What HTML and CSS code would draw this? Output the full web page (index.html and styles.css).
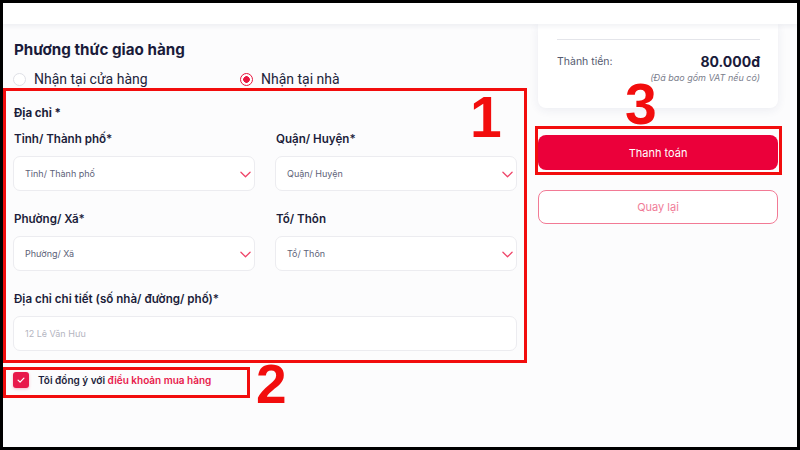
FILE: index.html
```html
<!DOCTYPE html>
<html lang="vi">
<head>
<meta charset="utf-8">
<title>Thanh toán</title>
<link rel="stylesheet" href="styles.css">
</head>
<body>
<div class="frame">
  <header class="topbar"></header>
  <main class="main">
    <section class="left">
      <h2 class="heading">Phương thức giao hàng</h2>
      <div class="radios">
        <label class="radio"><span class="dot"></span>Nhận tại cửa hàng</label>
        <label class="radio checked"><span class="dot"></span>Nhận tại nhà</label>
      </div>
      <div class="section-title">Địa chỉ *</div>
      <div class="grid">
        <div class="field">
          <div class="label">Tỉnh/ Thành phố*</div>
          <div class="select"><span>Tỉnh/ Thành phố</span><svg class="chev" viewBox="0 0 12 7" width="11" height="7"><path d="M1 1l5 5 5-5" fill="none" stroke="#ef4468" stroke-width="1.4" stroke-linecap="round" stroke-linejoin="round"/></svg></div>
        </div>
        <div class="field">
          <div class="label">Quận/ Huyện*</div>
          <div class="select"><span>Quận/ Huyện</span><svg class="chev" viewBox="0 0 12 7" width="11" height="7"><path d="M1 1l5 5 5-5" fill="none" stroke="#ef4468" stroke-width="1.4" stroke-linecap="round" stroke-linejoin="round"/></svg></div>
        </div>
        <div class="field">
          <div class="label">Phường/ Xã*</div>
          <div class="select"><span>Phường/ Xã</span><svg class="chev" viewBox="0 0 12 7" width="11" height="7"><path d="M1 1l5 5 5-5" fill="none" stroke="#ef4468" stroke-width="1.4" stroke-linecap="round" stroke-linejoin="round"/></svg></div>
        </div>
        <div class="field">
          <div class="label">Tổ/ Thôn</div>
          <div class="select"><span>Tổ/ Thôn</span><svg class="chev" viewBox="0 0 12 7" width="11" height="7"><path d="M1 1l5 5 5-5" fill="none" stroke="#ef4468" stroke-width="1.4" stroke-linecap="round" stroke-linejoin="round"/></svg></div>
        </div>
        <div class="field wide">
          <div class="label">Địa chỉ chi tiết (số nhà/ đường/ phố)*</div>
          <div class="input"><span>12 Lê Văn Hưu</span></div>
        </div>
      </div>
      <div class="agree">
        <span class="checkbox"><svg viewBox="0 0 12 12" width="10" height="10"><path d="M2.5 6.2l2.4 2.3 4.6-4.8" fill="none" stroke="#fff" stroke-width="1.5" stroke-linecap="round" stroke-linejoin="round"/></svg></span>
        <span class="agree-text">Tôi đồng ý với <span class="link">điều khoản mua hàng</span></span>
      </div>
    </section>
    <aside class="right">
      <div class="card">
        <div class="divider"></div>
        <div class="total-row"><span class="total-label">Thành tiền:</span><span class="total-value">80.000đ</span></div>
        <div class="vat">(Đã bao gồm VAT nếu có)</div>
      </div>
      <button class="btn-pay">Thanh toán</button>
      <button class="btn-back">Quay lại</button>
    </aside>
  </main>
  <div class="mark box1"></div>
  <div class="mark box2"></div>
  <div class="mark box3"></div>
  <div class="num num1">1</div>
  <div class="num num2">2</div>
  <div class="num num3">3</div>
</div>
</body>
</html>
```

FILE: styles.css
```css
* { box-sizing: border-box; }
html, body { margin: 0; padding: 0; background: #000; }
.frame {
  position: relative;
  margin: 3px;
  width: 794px;
  height: 444px;
  background: #fcfcfd;
  overflow: hidden;
  font-family: Inter, "Noto Sans", sans-serif;
  color: #1b1d3a;
}
.topbar {
  position: relative;
  z-index: 2;
  height: 21px;
  background: #fff;
  box-shadow: 0 2px 5px rgba(30, 40, 80, 0.07);
}
.main {
  display: flex;
  gap: 21px;
  padding-left: 10px;
}
.left { width: 504px; }
.heading {
  margin: 16px 0 0 1px;
  font-size: 15.2px;
  line-height: 20px;
  font-weight: 700;
  color: #1a1b3a;
}
.radios {
  display: flex;
  margin-top: 9px;
  height: 20px;
  align-items: center;
}
.radio {
  display: flex;
  align-items: center;
  gap: 8px;
  font-family: Roboto, "Noto Sans", sans-serif;
  font-size: 14px;
  color: #22233a;
  width: 227px;
}
.radio .dot {
  width: 13px;
  height: 13px;
  border-radius: 50%;
  border: 1px solid #dfe0e6;
  background: #fff;
}
.radio.checked .dot {
  border: 1.5px solid #e8163f;
  background: radial-gradient(circle, #e8163f 0 3px, #fff 3.6px);
}
.section-title {
  margin: 16px 0 0 1px;
  font-size: 11.5px;
  line-height: 16px;
  font-weight: 700;
  color: #1b1d3a;
}
.grid {
  display: grid;
  grid-template-columns: 242px 242px;
  column-gap: 20px;
  row-gap: 19px;
  margin-top: 9px;
}
.field.wide { grid-column: 1 / 3; }
.label {
  font-size: 11.6px;
  line-height: 18px;
  font-weight: 600;
  padding-left: 1px;
  color: #1b1d3a;
}
.field.wide .label { margin-bottom: 1px; }
.select, .input {
  margin-top: 8px;
  height: 35px;
  background: #fff;
  border: 1px solid #ececf0;
  border-radius: 7px;
  display: flex;
  align-items: center;
  justify-content: space-between;
  padding: 0 3px 0 11px;
  font-size: 9px;
  color: #5d6278;
}
.input { color: #b4b5bf; }
.chev { margin-top: 1px; }
.agree {
  margin-top: 21px;
  display: flex;
  align-items: center;
  gap: 9px;
}
.checkbox {
  width: 16px;
  height: 16px;
  border-radius: 3px;
  background: #e8194b;
  display: flex;
  align-items: center;
  justify-content: center;
  box-shadow: 0 1px 3px rgba(232, 25, 75, 0.3);
}
.agree-text {
  font-size: 10px;
  font-weight: 600;
  color: #1b1d3a;
}
.link { color: #e8194b; }
.right { width: 240px; }
.card {
  height: 84px;
  background: #fff;
  border-radius: 0 0 8px 8px;
  box-shadow: 0 2px 10px rgba(40, 50, 100, 0.08);
  padding: 15px 18px 0 19px;
}
.divider { height: 1px; background: #e4e5ea; }
.total-row {
  display: flex;
  justify-content: space-between;
  align-items: center;
  margin-top: 13px;
  height: 16px;
}
.total-label { font-size: 10.5px; color: #555a70; }
.total-value { font-size: 14px; font-weight: 700; color: #1a1b3a; }
.vat {
  text-align: right;
  margin-top: 3px;
  font-size: 9px;
  font-style: italic;
  color: #7a7d8c;
}
.btn-pay, .btn-back {
  display: block;
  width: 240px;
  font-family: Inter, "Noto Sans", sans-serif;
  font-size: 11px;
  border-radius: 8px;
  cursor: pointer;
}
.btn-pay {
  margin-top: 27px;
  height: 35px;
  background: #eb003a;
  border: none;
  color: #fff;
}
.btn-back {
  margin-top: 20px;
  height: 34px;
  background: #fff;
  border: 1.5px solid #f27a95;
  color: #f07c97;
}
.mark {
  position: absolute;
  border: 3px solid #f20d0d;
  z-index: 3;
}
.box1 { left: 0; top: 85px; width: 524px; height: 275px; }
.box2 { left: 0; top: 364px; width: 247px; height: 31px; }
.box3 { left: 532px; top: 123px; width: 247px; height: 49px; }
.num {
  position: absolute;
  z-index: 3;
  font-family: "Liberation Sans", Arial, sans-serif;
  font-weight: 700;
  color: #f20d0d;
  line-height: 1;
}
.num1 { left: 467px; top: 86px; font-size: 57px; }
.num2 { left: 253px; top: 354px; font-size: 55px; }
.num3 { left: 622px; top: 73px; font-size: 57px; }
```
